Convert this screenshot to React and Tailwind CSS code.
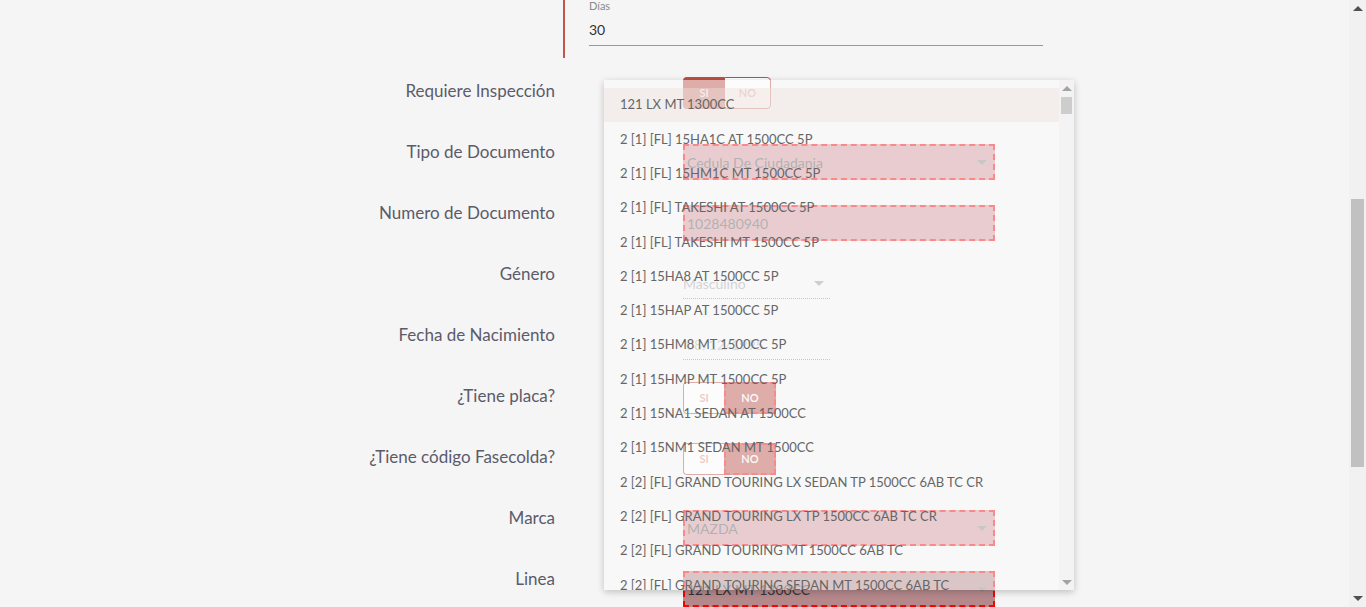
import React from 'react';

const items = [
  '121 LX MT 1300CC',
  '2 [1] [FL] 15HA1C AT 1500CC 5P',
  '2 [1] [FL] 15HM1C MT 1500CC 5P',
  '2 [1] [FL] TAKESHI AT 1500CC 5P',
  '2 [1] [FL] TAKESHI MT 1500CC 5P',
  '2 [1] 15HA8 AT 1500CC 5P',
  '2 [1] 15HAP AT 1500CC 5P',
  '2 [1] 15HM8 MT 1500CC 5P',
  '2 [1] 15HMP MT 1500CC 5P',
  '2 [1] 15NA1 SEDAN AT 1500CC',
  '2 [1] 15NM1 SEDAN MT 1500CC',
  '2 [2] [FL] GRAND TOURING LX SEDAN TP 1500CC 6AB TC CR',
  '2 [2] [FL] GRAND TOURING LX TP 1500CC 6AB TC CR',
  '2 [2] [FL] GRAND TOURING MT 1500CC 6AB TC',
  '2 [2] [FL] GRAND TOURING SEDAN MT 1500CC 6AB TC',
];

const Caret = ({ className = '', up = false }) => (
  <svg width="10" height="5" viewBox="0 0 10 5" className={className}>
    <path d={up ? 'M0 5 L5 0 L10 5 Z' : 'M0 0 L10 0 L5 5 Z'} fill="currentColor" />
  </svg>
);

// Toggle SI / NO
const Toggle = ({ value }) => {
  const si = value === 'SI';
  return (
    <div className="mt-[16px] flex h-[32px] text-[11px] font-semibold">
      <div
        className={`flex w-[41px] items-center justify-center rounded-l-[4px] border border-r-0 border-[#bd5047] ${
          si ? 'bg-[#bd5047] text-white' : 'bg-white text-[#d9877f]'
        }`}
      >
        SI
      </div>
      {si ? (
        <div className="flex w-[47px] items-center justify-center rounded-r-[4px] border border-[#bd5047] bg-white text-[#d9877f]">
          NO
        </div>
      ) : (
        <div className="flex w-[52px] items-center justify-center border-2 border-dashed border-[#ff0000] bg-[#bd5047] text-white">
          NO
        </div>
      )}
    </div>
  );
};

const ErrorSelect = ({ text, dark, caret = true }) => (
  <div
    className={`mt-[22px] flex h-[36px] w-[312px] items-center justify-between border-2 border-dashed border-[#ff0000] pl-[2px] pr-[6px] text-[14px] ${
      dark ? 'bg-[#b5888b] text-[#333]' : 'bg-[#d4969d] text-[#5a5a5a]'
    }`}
  >
    <span>{text}</span>
    {caret && <Caret className="text-[#8a8a8a]" />}
  </div>
);

const Row = ({ label, children }) => (
  <div className="flex h-[61px]">
    <div className="w-[555px] pt-[20px] text-right text-[17px] leading-[20px] text-[#5b5b6b]">{label}</div>
    <div className="ml-[128px]">{children}</div>
  </div>
);

export default function App() {
  return (
    <div className="flex h-[607px] overflow-hidden bg-[#f5f5f5] font-['Lato','Open_Sans',sans-serif]">
      <div className="relative flex-1">
        {/* bloque superior */}
        <div className="ml-[563px] h-[58px] w-[482px] border-l-2 border-[#c0574f] pl-[24px]">
          <div className="text-[11px] leading-[12px] text-[#8a8a8a]">Días</div>
          <div className="mt-[8px] w-[454px] border-b border-[#999] pb-[5px] text-[14px] leading-[20px] text-[#333]">30</div>
        </div>

        <div className="mt-[3px]">
          <Row label="Requiere Inspección">
            <Toggle value="SI" />
          </Row>
          <Row label="Tipo de Documento">
            <ErrorSelect text="Cedula De Ciudadania" />
          </Row>
          <Row label="Numero de Documento">
            <ErrorSelect text="1028480940" caret={false} />
          </Row>
          <Row label="Género">
            <div className="mt-[24px] flex h-[31px] w-[147px] items-center justify-between border-b border-dotted border-[#8a8a8a] pr-[6px] text-[14px] text-[#a5a5ad]">
              <span>Masculino</span>
              <Caret className="text-[#9a9a9a]" />
            </div>
          </Row>
          <Row label="Fecha de Nacimiento">
            <div className="mt-[24px] flex h-[31px] w-[147px] items-center border-b border-dotted border-[#8a8a8a] pl-[3px] text-[14px] text-[#b5b5b5]">
              08/12/1995
            </div>
          </Row>
          <Row label="¿Tiene placa?">
            <Toggle value="NO" />
          </Row>
          <Row label="¿Tiene código Fasecolda?">
            <Toggle value="NO" />
          </Row>
          <Row label="Marca">
            <ErrorSelect text="MAZDA" />
          </Row>
          <Row label="Linea">
            <ErrorSelect text="121 LX MT 1300CC" dark />
          </Row>
        </div>

        {/* menu desplegable */}
        <div className="absolute left-[604px] top-[80px] z-10 flex h-[510px] w-[470px] overflow-hidden bg-[#fafafa]/55 shadow-[0_2px_7px_rgba(0,0,0,0.22)]">
          <div className="flex-1 pt-[8px]">
            {items.map((it, i) => (
              <div
                key={it}
                className={`flex h-[34.3px] items-center pl-[16px] text-[13px] text-[#666] ${
                  i === 0 ? 'bg-[#ede0dc]/45' : ''
                }`}
              >
                {it}
              </div>
            ))}
          </div>
          <div className="flex w-[15px] flex-col items-center bg-[#f1f1f1]/80">
            <div className="flex h-[16px] items-center justify-center">
              <Caret up className="text-[#a3a3a3]" />
            </div>
            <div className="mt-[1px] h-[17px] w-[11px] bg-[#cdcdcd]" />
            <div className="flex-1" />
            <div className="flex h-[16px] items-center justify-center">
              <Caret className="text-[#a3a3a3]" />
            </div>
          </div>
        </div>
      </div>

      {/* barra de desplazamiento */}
      <div className="flex w-[17px] flex-col items-center bg-[#f1f1f1]">
        <div className="flex h-[17px] items-center justify-center">
          <Caret up className="text-[#505050]" />
        </div>
        <div className="flex-1">
          <div className="mt-[182px] h-[268px] w-[13px] bg-[#c1c1c1]" />
        </div>
        <div className="flex h-[17px] items-center justify-center">
          <Caret className="text-[#505050]" />
        </div>
      </div>
    </div>
  );
}
